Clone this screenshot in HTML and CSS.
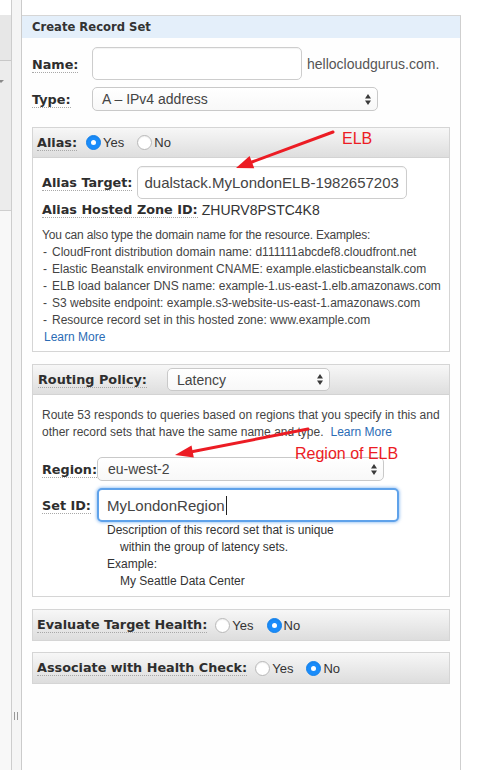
FILE: index.html
```html
<!DOCTYPE html>
<html>
<head>
<meta charset="utf-8">
<title>Create Record Set</title>
<link rel="stylesheet" href="styles.css">
</head>
<body>
<div class="app">
  <div class="side">
    <div class="side-top"></div>
    <div class="side-a"></div>
    <div class="side-b"><span class="side-caret"></span></div>
    <div class="side-c"></div>
  </div>
  <div class="gutter"><div class="grip"></div></div>
  <div class="panel">
    <div class="panel-head">Create Record Set</div>
    <div class="form">
      <div class="row row-name">
        <div class="lcol w60"><span class="lbl">Name:</span></div>
        <div class="input name-input"></div>
        <span class="suffix">hellocloudgurus.com.</span>
      </div>
      <div class="row row-type">
        <div class="lcol w60"><span class="lbl">Type:</span></div>
        <div class="select type-select"><span>A – IPv4 address</span>
          <svg class="updown" width="6" height="11" viewBox="0 0 6 11"><path d="M0 4.5 L3 0 L6 4.5Z M0 6.5 L6 6.5 L3 11Z"/></svg>
        </div>
      </div>

      <section class="box alias-box">
        <div class="box-head">
          <span class="lbl">Alias:</span>
          <div class="radios">
            <span class="radio on"><i></i>Yes</span>
            <span class="radio"><i></i>No</span>
          </div>
        </div>
        <div class="box-body alias-body">
          <div class="row">
            <span class="lbl">Alias Target:</span>
            <div class="input target-input">dualstack.MyLondonELB-1982657203</div>
          </div>
          <div class="zone-row"><span class="lbl">Alias Hosted Zone ID:</span><span class="zone">ZHURV8PSTC4K8</span></div>
          <div class="help">
            <p class="help-intro">You can also type the domain name for the resource. Examples:</p>
            <ul>
              <li><span class="dash">-</span>CloudFront distribution domain name: d111111abcdef8.cloudfront.net</li>
              <li><span class="dash">-</span>Elastic Beanstalk environment CNAME: example.elasticbeanstalk.com</li>
              <li><span class="dash">-</span>ELB load balancer DNS name: example-1.us-east-1.elb.amazonaws.com</li>
              <li><span class="dash">-</span>S3 website endpoint: example.s3-website-us-east-1.amazonaws.com</li>
              <li><span class="dash">-</span>Resource record set in this hosted zone: www.example.com</li>
            </ul>
            <a class="learn">Learn More</a>
          </div>
        </div>
      </section>

      <section class="box routing-box">
        <div class="box-head routing-head">
          <span class="lbl">Routing Policy:</span>
          <div class="select policy-select"><span>Latency</span>
            <svg class="updown" width="6" height="11" viewBox="0 0 6 11"><path d="M0 4.5 L3 0 L6 4.5Z M0 6.5 L6 6.5 L3 11Z"/></svg>
          </div>
        </div>
        <div class="box-body routing-body">
          <div class="route-text">
            <div class="line">Route 53 responds to queries based on regions that you specify in this and</div>
            <div class="line"><span>other record sets that have the same name and type.</span><a class="learn inline">Learn More</a></div>
          </div>
          <div class="row row-region">
            <div class="lcol w55"><span class="lbl">Region:</span></div>
            <div class="select region-select"><span>eu-west-2</span>
              <svg class="updown" width="6" height="11" viewBox="0 0 6 11"><path d="M0 4.5 L3 0 L6 4.5Z M0 6.5 L6 6.5 L3 11Z"/></svg>
            </div>
          </div>
          <div class="row row-setid">
            <div class="lcol w55"><span class="lbl">Set ID:</span></div>
            <div class="input setid-input"><span>MyLondonRegion</span><span class="caret"></span></div>
          </div>
          <div class="desc">
            <div>Description of this record set that is unique</div>
            <div class="ind">within the group of latency sets.</div>
            <div>Example:</div>
            <div class="ind">My Seattle Data Center</div>
          </div>
        </div>
      </section>

      <section class="box bar-box eval-box">
        <span class="lbl">Evaluate Target Health:</span>
        <div class="radios">
          <span class="radio"><i></i>Yes</span>
          <span class="radio on"><i></i>No</span>
        </div>
      </section>

      <section class="box bar-box assoc-box">
        <span class="lbl">Associate with Health Check:</span>
        <div class="radios">
          <span class="radio"><i></i>Yes</span>
          <span class="radio on"><i></i>No</span>
        </div>
      </section>
    </div>
  </div>
</div>

<svg class="annot" width="481" height="770" viewBox="0 0 481 770">
  <line x1="333" y1="132" x2="252" y2="162" stroke="#ec1c24" stroke-width="3" stroke-linecap="round"/>
  <polygon points="236,168 254.2,168.2 249.6,156" fill="#ec1c24"/>
  <line x1="308" y1="429" x2="193" y2="451.5" stroke="#ec1c24" stroke-width="3" stroke-linecap="round"/>
  <polygon points="175,455 193.8,457.6 191.5,445.4" fill="#ec1c24"/>
</svg>
<div class="note note-elb">ELB</div>
<div class="note note-region">Region of ELB</div>
</body>
</html>
```

FILE: styles.css
```css
* { box-sizing: border-box; }
html, body { margin: 0; padding: 0; }
body {
  width: 481px;
  height: 770px;
  overflow: hidden;
  position: relative;
  background: #fff;
  font-family: "Liberation Sans", Arial, sans-serif;
  color: #333;
}
p, ul { margin: 0; padding: 0; }
ul { list-style: none; }

.app { display: flex; height: 770px; }

/* left strip */
.side {
  width: 12px;
  border-right: 1px solid #cdcdcd;
  display: flex;
  flex-direction: column;
}
.side-top { height: 15px; background: #fff; }
.side-a { height: 46px; background: #e7e7e7; border-bottom: 1px solid #c8c8c8; }
.side-b {
  height: 150px;
  background: #ececec;
  border-bottom: 1px solid #cfcfcf;
  padding-top: 19px;
}
.side-caret {
  display: block;
  width: 0; height: 0;
  margin-left: -2px;
  border-left: 3px solid transparent;
  border-right: 3px solid transparent;
  border-top: 3px solid #8a8a8a;
}
.side-c { flex: 1; background: #f8f8f8; }

.gutter {
  width: 10px;
  background: #f5f5f5;
  border-right: 1px solid #cbcbcb;
}
.grip {
  width: 4px;
  height: 8px;
  margin: 712px 0 0 2px;
  border-left: 1px solid #999;
  border-right: 1px solid #999;
}

/* panel */
.panel {
  width: 439px;
  margin-top: 15px;
  border-top: 1px solid #d6d6d6;
  border-right: 1px solid #cfcfcf;
  background: #fefefe;
  display: flex;
  flex-direction: column;
}
.panel-head {
  height: 22px;
  background: #e4effa;
  padding-left: 10px;
  display: flex;
  align-items: center;
  font: bold 11.6px "DejaVu Sans", Verdana, sans-serif;
  color: #333;
}
.form { padding: 9px 10px 0 10px; }

.row { display: flex; align-items: center; }
.lcol { flex: none; }
.w60 { width: 60px; }
.w55 { width: 55px; }

.lbl {
  font: bold 12.8px/15px "DejaVu Sans", Verdana, sans-serif;
  color: #2e2e2e;
  border-bottom: 1px dotted #a8a8a8;
  white-space: nowrap;
}

.input {
  background: #fff;
  border: 1px solid #cdcdcd;
  border-radius: 5px;
  box-shadow: inset 0 1px 1px rgba(0,0,0,0.05);
  font-size: 15px;
  color: #444;
  display: flex;
  align-items: center;
  white-space: nowrap;
  overflow: hidden;
}
.select {
  background: linear-gradient(#ffffff, #f8f8f8);
  border: 1px solid #c9c9c9;
  border-radius: 5px;
  font-size: 14px;
  color: #444;
  display: flex;
  align-items: center;
  justify-content: space-between;
  padding: 0 6px 0 9px;
  white-space: nowrap;
}
.updown { fill: #3a3a3a; flex: none; }

.name-input { width: 210px; height: 33px; }
.suffix { margin-left: 5px; font-size: 14px; color: #555; }
.row-type { margin-top: 7px; }
.type-select { width: 286px; height: 24px; }

/* boxes */
.box {
  border: 1px solid #d5d5d5;
  background: #fff;
}
.box-head {
  height: 30px;
  border-bottom: 1px solid #d3d3d3;
  background: linear-gradient(#f7f7f7, #dedede);
  display: flex;
  align-items: center;
  padding-left: 4px;
}
.alias-box { margin-top: 16px; }
.alias-box .box-head .radios { margin-left: 9px; }

.radios { display: flex; align-items: center; }
.radio {
  display: inline-flex;
  align-items: center;
  font-size: 13px;
  color: #333;
  margin-right: 13px;
}
.radio i {
  width: 15px;
  height: 15px;
  border-radius: 50%;
  border: 1px solid #b8b8b8;
  background: #fff;
  margin-right: 2px;
  box-shadow: inset 0 1px 1px rgba(0,0,0,0.06);
  display: flex;
  align-items: center;
  justify-content: center;
}
.radio.on i { background: #1a8cfa; border-color: #1682ea; }
.radio.on i::after {
  content: "";
  width: 5px;
  height: 5px;
  border-radius: 50%;
  background: #fff;
}

.alias-body { padding: 8px 8px 5px 9px; }
.alias-body .row .lbl { margin-right: 5px; }
.target-input { width: 270px; height: 33px; padding-left: 6px; }
.zone-row { margin-top: 2px; height: 18px; display: flex; align-items: center; }
.zone { font-size: 14px; color: #333; margin-left: 4px; }

.help { margin-top: 8px; font-size: 12px; line-height: 17px; color: #444; }
.help-intro { letter-spacing: -0.2px; }
.dash { display: inline-block; width: 10px; padding-left: 1px; }
.learn { color: #2b6cb5; cursor: pointer; }
.help .learn { display: block; padding-left: 2px; }

.routing-box { margin-top: 12px; }
.routing-head { padding-left: 5px; }
.policy-select { width: 163px; height: 23px; margin-left: 20px; }
.routing-body { padding: 12px 8px 6px 9px; }
.route-text { font-size: 12px; line-height: 16.5px; color: #444; }
.route-text .line { white-space: nowrap; }
.learn.inline { margin-left: 7px; }
.row-region { margin-top: 17px; }
.region-select { width: 287px; height: 24px; padding-left: 10px; }
.row-setid { margin-top: 7px; }
.setid-input {
  width: 302px;
  height: 34px;
  padding-left: 8px;
  border: 2px solid #5fa2ea;
  box-shadow: 0 0 3px 1px rgba(95,160,235,0.55);
}
.caret { display: inline-block; width: 1px; height: 19px; background: #222; margin-left: 1px; }
.desc { padding-left: 65px; font-size: 12px; line-height: 17px; color: #333; }
.desc .ind { padding-left: 13px; }

.bar-box {
  height: 32px;
  background: linear-gradient(#f7f7f7, #dddddd);
  display: flex;
  align-items: center;
  padding-left: 4px;
}
.bar-box .radios { margin-left: 8px; }
.eval-box { margin-top: 12px; }
.assoc-box { margin-top: 11px; }

/* annotation overlay */
.annot { position: absolute; left: 0; top: 0; pointer-events: none; }
.note {
  position: absolute;
  font: 16px/16px "Liberation Sans", Arial, sans-serif;
  color: #ec1c24;
  white-space: nowrap;
}
.note-elb { left: 342px; top: 131px; }
.note-region { left: 295px; top: 446px; }
```
